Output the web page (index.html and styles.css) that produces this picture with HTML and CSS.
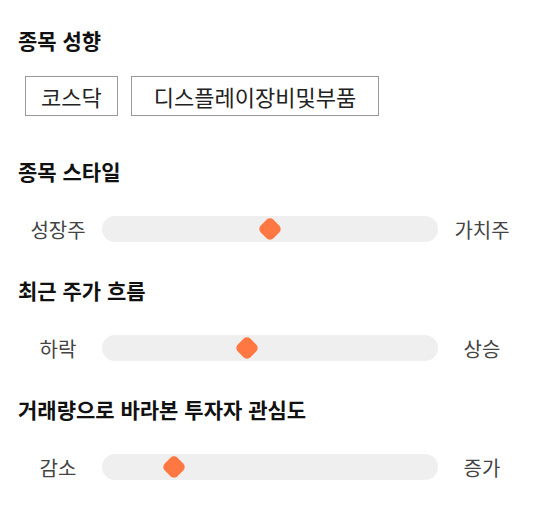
FILE: index.html
```html
<!DOCTYPE html>
<html lang="ko">
<head>
    <meta charset="UTF-8">
    <meta name="viewport" content="width=device-width, initial-scale=1.0">
    <title>종목 분석</title>
    <link rel="stylesheet" href="styles.css">
</head>
<body>

    <div class="section">
        <div class="section-title">종목 성향</div>
        <div class="chips">
            <span class="chip">코스닥</span>
            <span class="chip chip-sector">디스플레이장비및부품</span>
        </div>
    </div>

    <div class="section">
        <div class="section-title">종목 스타일</div>
        <div class="slider-row">
            <span class="slider-label">성장주</span>
            <div class="track">
                <div class="thumb" style="left: 50%"></div>
            </div>
            <span class="slider-label">가치주</span>
        </div>
    </div>

    <div class="section">
        <div class="section-title">최근 주가 흐름</div>
        <div class="slider-row">
            <span class="slider-label">하락</span>
            <div class="track">
                <div class="thumb" style="left: 43.2%"></div>
            </div>
            <span class="slider-label">상승</span>
        </div>
    </div>

    <div class="section">
        <div class="section-title">거래량으로 바라본 투자자 관심도</div>
        <div class="slider-row">
            <span class="slider-label">감소</span>
            <div class="track">
                <div class="thumb" style="left: 21.4%"></div>
            </div>
            <span class="slider-label">증가</span>
        </div>
    </div>

</body>
</html>
```

FILE: styles.css
```css
body {
    margin: 0;
    padding: 28px 18px 0;
    font-family: "Noto Sans CJK KR", "Noto Sans", sans-serif;
    background: #fff;
    color: #222;
}

.section {
    padding-bottom: 29px;
}

.section-title {
    font-size: 21px;
    line-height: 24px;
    font-weight: bold;
    color: #111;
    margin-bottom: 26px;
}

.chips {
    display: flex;
    gap: 13px;
    margin-top: -2px;
    padding-left: 7px;
    padding-bottom: 14px;
}

.chip {
    display: flex;
    align-items: center;
    height: 40px;
    box-sizing: border-box;
    padding: 0 15px;
    font-size: 22px;
    color: #222;
    border: 1px solid #9a9a9a;
}

.chip-sector {
    padding: 0 22px;
}

.slider-row {
    display: flex;
    align-items: center;
    height: 40px;
    gap: 4px;
}

.slider-label {
    width: 80px;
    text-align: center;
    font-size: 20px;
    color: #444;
}

.track {
    position: relative;
    flex: 1;
    height: 26px;
    background: #efefef;
    border-radius: 13px;
}

.thumb {
    position: absolute;
    top: 50%;
    width: 18px;
    height: 18px;
    background: #ff7843;
    border-radius: 5px;
    transform: translate(-50%, -50%) rotate(45deg);
}
```
